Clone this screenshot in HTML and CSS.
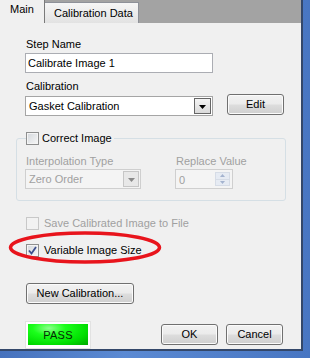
FILE: index.html
```html
<!DOCTYPE html>
<html>
<head>
<meta charset="utf-8">
<title>Calibrate Image</title>
<link rel="stylesheet" href="styles.css">
</head>
<body>
<div class="dialog">
  <div class="tabs">
    <div class="tab tab-active">Main</div>
    <div class="tab">Calibration Data</div>
  </div>

  <div class="page">
    <div class="label label-first">Step Name</div>
    <div class="textbox">Calibrate Image 1</div>

    <div class="label label-cal">Calibration</div>
    <div class="row">
      <div class="combo combo-main">
        <span class="combo-text">Gasket Calibration</span>
        <span class="drop"><svg width="7" height="4" viewBox="0 0 7 4"><path d="M0 0h7L3.5 4z" fill="#000"/></svg></span>
      </div>
      <div class="btn btn-edit">Edit</div>
    </div>

    <div class="group">
      <div class="group-title"><span class="check"></span>Correct Image</div>
      <div class="group-body">
        <div class="field">
          <div class="label dim">Interpolation Type</div>
          <div class="combo combo-dim">
            <span class="combo-text">Zero Order</span>
            <span class="drop"><svg width="7" height="4" viewBox="0 0 7 4"><path d="M0 0h7L3.5 4z" fill="#8a8a8a"/></svg></span>
          </div>
        </div>
        <div class="field field-right">
          <div class="label dim">Replace Value</div>
          <div class="spin">
            <span class="combo-text">0</span>
            <span class="spin-btns">
              <span class="spin-btn"><svg width="5" height="3" viewBox="0 0 5 3"><path d="M0 3h5L2.5 0z" fill="#a4b3cf"/></svg></span>
              <span class="spin-btn"><svg width="5" height="3" viewBox="0 0 5 3"><path d="M0 0h5L2.5 3z" fill="#a4b3cf"/></svg></span>
            </span>
          </div>
        </div>
      </div>
    </div>

    <div class="checkrow checkrow-save dim"><span class="check check-dim"></span>Save Calibrated Image to File</div>
    <div class="checkrow checkrow-size">
      <span class="check"><svg width="11" height="11" viewBox="0 0 11 11"><path d="M2 5.5l2.5 3L9 2" fill="none" stroke="#3c4f8e" stroke-width="1.8"/></svg></span>Variable Image Size
    </div>

    <div class="btn btn-new">New Calibration...</div>

    <div class="footer">
      <div class="pass"><div class="pass-inner">PASS</div></div>
      <div class="btn btn-ok">OK</div>
      <div class="btn btn-cancel">Cancel</div>
    </div>

    <!-- red marker drawn over the dialog -->
    <svg class="marker" width="156" height="36" viewBox="0 0 156 36">
      <ellipse cx="78" cy="17.5" rx="74.5" ry="14.5" fill="none" stroke="#e8141c" stroke-width="3.5"/>
    </svg>
  </div>
</div>
</body>
</html>
```

FILE: styles.css
```css
body {
  margin: 0;
  width: 310px;
  height: 358px;
  overflow: hidden;
  background: linear-gradient(90deg, #4672bd, #5b8ad3 40%, #4876c2);
  font-family: "Liberation Sans", Arial, sans-serif;
  font-size: 11px;
  color: #000;
}

.dialog {
  width: 301px;
  height: 349px;
  background: #f0f0f0;
  border-right: 2px solid #34486a;
  border-bottom: 2px solid #34486a;
  display: flex;
  flex-direction: column;
}

/* tabs */
.tabs {
  display: flex;
  align-items: flex-end;
  height: 23px;
  background: #a3a3a3;
}
.tab {
  height: 21px;
  width: 84px;
  padding-left: 9px;
  line-height: 20px;
  background: linear-gradient(#f6f6f6, #e2e2e2);
  border-top: 1px solid #8e9199;
  border-right: 1px solid #8e9199;
  box-sizing: border-box;
  width: 94px;
}
.tab-active {
  width: 45px;
  height: 23px;
  padding-left: 10px;
  line-height: 18px;
  background: #f0f0f0;
  border-top: none;
  border-right: 1px solid #7a7a7a;
}

/* main page */
.page {
  position: relative;
  flex: 1;
  padding: 15px 0 0 25px;
  display: flex;
  flex-direction: column;
  align-items: flex-start;
}

.label {
  line-height: 13px;
  padding-left: 1px;
}
.label-first {
  margin-bottom: 2px;
}
.label-cal {
  margin-top: 7px;
  margin-bottom: 3px;
}
.dim {
  color: #a0a0a0;
}

.textbox {
  width: 188px;
  height: 20px;
  box-sizing: border-box;
  background: #fff;
  border: 1px solid #abadb3;
  padding-left: 2px;
  line-height: 18px;
}

.row {
  display: flex;
  align-items: flex-start;
}

.combo {
  display: flex;
  justify-content: space-between;
  box-sizing: border-box;
  height: 20px;
  padding: 1px;
  border: 1px solid #a5a5a5;
  background: #fff;
}
.combo-text {
  padding-left: 2px;
  line-height: 16px;
}
.combo-main {
  width: 188px;
}
.combo-main .drop {
  width: 17px;
  height: 16px;
  box-sizing: border-box;
  border: 1px solid #666;
  background: linear-gradient(#f4f4f4, #dadada);
  display: flex;
  align-items: flex-end;
  justify-content: center;
  padding-bottom: 4px;
}
.combo-dim {
  width: 116px;
  border-color: #cfcfcf;
  background: #f4f4f4;
  color: #a0a0a0;
}
.combo-dim .drop {
  width: 16px;
  height: 16px;
  box-sizing: border-box;
  border: 1px solid #c6c6c6;
  background: #e8e8e8;
  display: flex;
  align-items: center;
  justify-content: center;
  padding-top: 2px;
}

.btn {
  box-sizing: border-box;
  height: 21px;
  border: 1px solid #707070;
  border-radius: 3px;
  background: linear-gradient(#f2f2f2 0%, #ebebeb 48%, #dddddd 52%, #cfcfcf 100%);
  box-shadow: inset 0 0 0 1px #fbfbfb;
  text-align: center;
  line-height: 19px;
}
.btn-edit {
  width: 57px;
  margin: -2px 0 0 14px;
}
.btn-new {
  width: 108px;
  margin: 26px 0 0 1px;
}

/* group box */
.group {
  margin: 22px 0 0 -9px;
  width: 270px;
  box-sizing: border-box;
  border: 1px solid #d5dfe5;
  border-radius: 3px;
  padding: 0 0 11px 8px;
}
.group-title {
  display: flex;
  align-items: center;
  margin: -7px 0 0 1px;
  padding-right: 2px;
  width: fit-content;
  height: 13px;
  background: #f0f0f0;
  line-height: 13px;
}
.group-title .check {
  margin-right: 3px;
}
.group-body {
  display: flex;
  margin-top: 10px;
}
.field .label {
  margin-bottom: 1px;
}
.field-right {
  margin-left: 34px;
}

.spin {
  display: flex;
  justify-content: space-between;
  box-sizing: border-box;
  width: 58px;
  height: 20px;
  padding: 2px 2px 2px 1px;
  border: 1px solid #cfcfcf;
  background: #f4f4f4;
  color: #a0a0a0;
}
.spin-btns {
  display: flex;
  flex-direction: column;
  width: 13px;
  border: 1px solid #d6dce6;
}
.spin-btn {
  flex: 1;
  display: flex;
  align-items: center;
  justify-content: center;
  background: #e6ebf3;
}
.spin-btn + .spin-btn {
  border-top: 1px solid #d6dce6;
}

/* checkboxes */
.check {
  display: inline-flex;
  align-items: center;
  justify-content: center;
  box-sizing: border-box;
  width: 13px;
  height: 13px;
  border: 1px solid #8e8f8f;
  background: linear-gradient(135deg, #d3d7dc, #f7f7f7);
  box-shadow: inset 0 0 0 1px #f4f4f4;
}
.check-dim {
  border-color: #c8c8c8;
  background: #f2f2f2;
  box-shadow: none;
}
.checkrow {
  display: flex;
  align-items: center;
  height: 13px;
  line-height: 13px;
  margin-left: 1px;
}
.checkrow .check {
  margin-right: 5px;
}
.checkrow-save {
  margin-top: 16px;
}
.checkrow-size {
  margin-top: 14px;
}

/* footer */
.footer {
  display: flex;
  align-items: flex-start;
  margin-top: 17px;
  width: 258px;
}
.pass {
  box-sizing: border-box;
  width: 66px;
  height: 28px;
  padding: 2px 2px 3px 2px;
  background: #fff;
  border: 1px solid #e2e2e2;
}
.pass-inner {
  height: 100%;
  background: radial-gradient(ellipse at 35% 20%, #8dff8d 0%, #1bff1b 30%, #00dd00 70%, #00a800 100%);
  color: #062806;
  text-align: center;
  line-height: 23px;
  letter-spacing: 0.3px;
}
.btn-ok {
  width: 57px;
  height: 21px;
  margin: 3px 0 0 auto;
}
.btn-cancel {
  width: 57px;
  height: 21px;
  margin: 3px 0 0 8px;
}

.marker {
  position: absolute;
  left: 7px;
  top: 207px;
}
```
